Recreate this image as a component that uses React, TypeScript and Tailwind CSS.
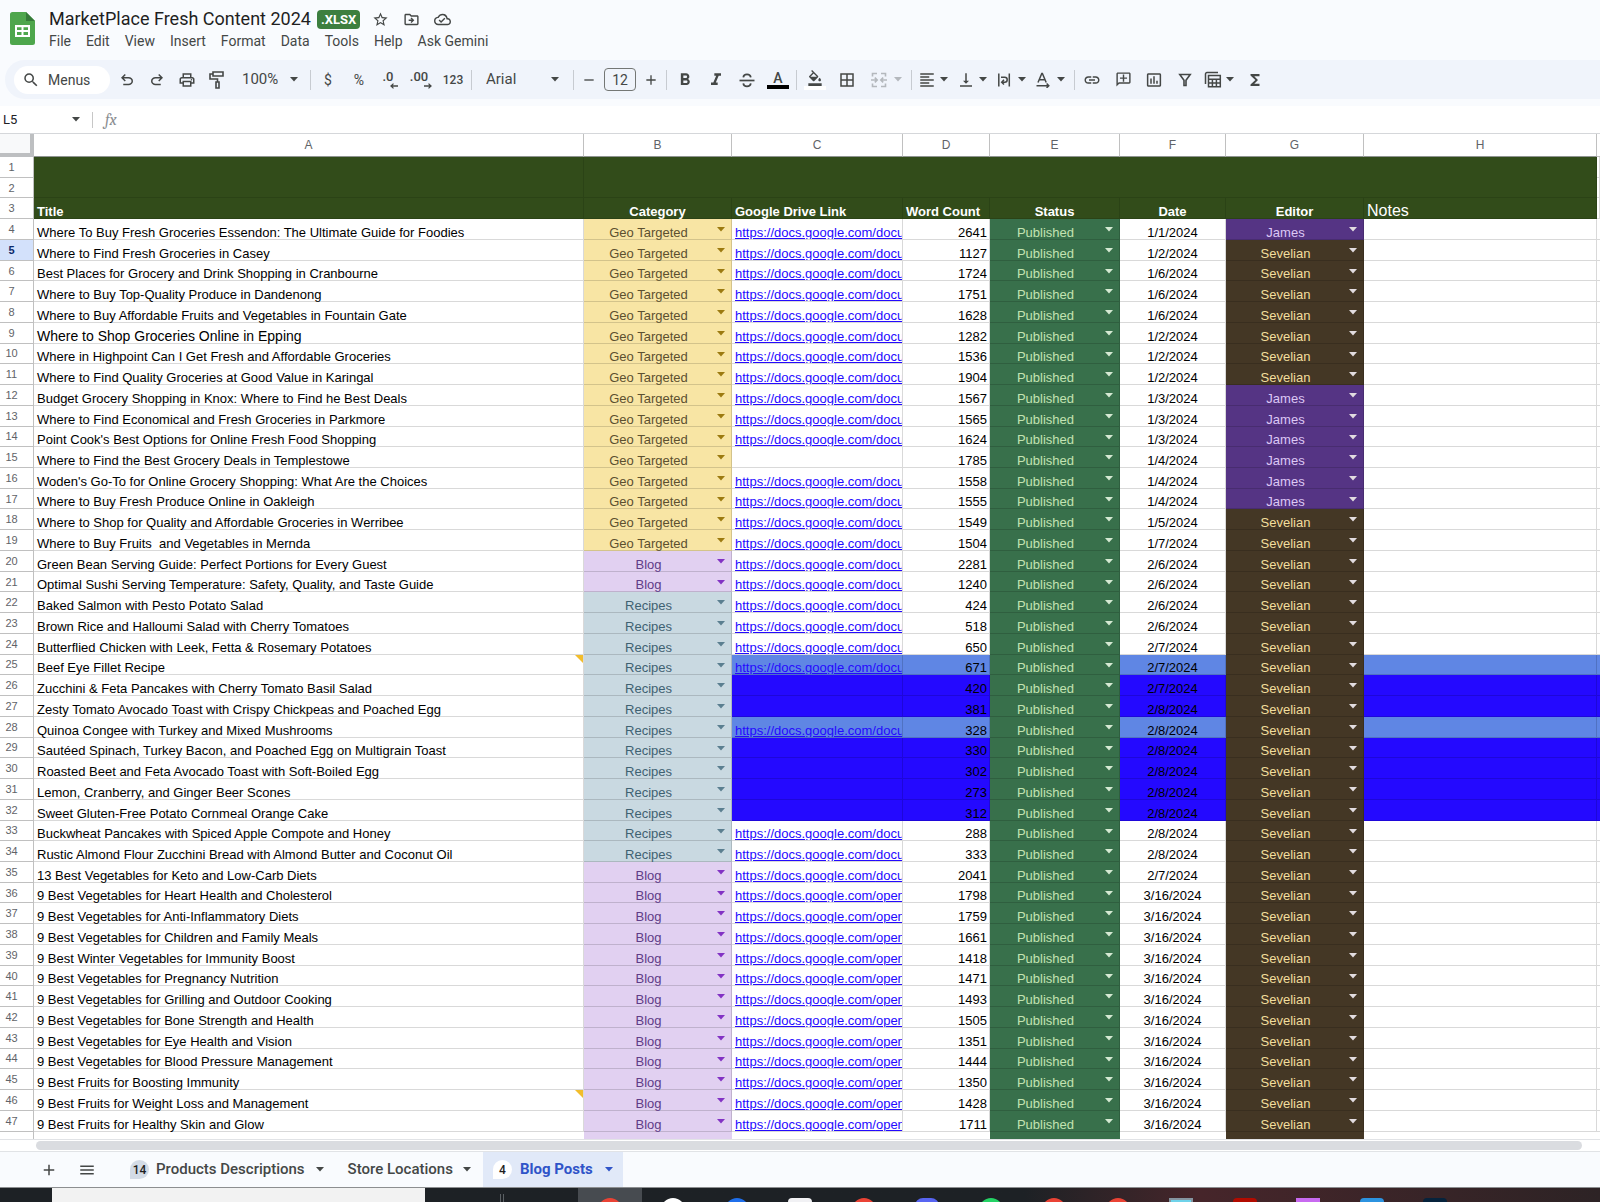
import type { ReactNode } from 'react'
import {
  MdAdd,
  MdBorderAll,
  MdFormatAlignLeft,
  MdFormatBold,
  MdFormatColorFill,
  MdFormatItalic,
  MdFunctions,
  MdInsertChartOutlined,
  MdLink,
  MdMenu,
  MdOutlineAddComment,
  MdOutlineCloudDone,
  MdOutlineDriveFileMove,
  MdOutlineFilterAlt,
  MdOutlinePrint,
  MdRemove,
  MdSearch,
  MdStarBorder,
  MdStrikethroughS,
  MdVerticalAlignBottom,
} from 'react-icons/md'

type Category = 'Geo Targeted' | 'Blog' | 'Recipes'
type Editor = 'James' | 'Sevelian'
type LinkKind = 'docu' | 'open' | ''

interface Post {
  title: string
  category: Category
  link: LinkKind
  words: number
  date: string
  editor: Editor
  shade?: 'light' | 'dark'
  note?: boolean
  large?: boolean
}

function post(
  title: string,
  category: Category,
  link: LinkKind,
  words: number,
  date: string,
  editor: Editor = 'Sevelian',
  extra: Partial<Post> = {},
): Post {
  return { title, category, link, words, date, editor, ...extra }
}

const posts: Post[] = [
  post('Where To Buy Fresh Groceries Essendon: The Ultimate Guide for Foodies', 'Geo Targeted', 'docu', 2641, '1/1/2024', 'James'),
  post('Where to Find Fresh Groceries in Casey', 'Geo Targeted', 'docu', 1127, '1/2/2024'),
  post('Best Places for Grocery and Drink Shopping in Cranbourne', 'Geo Targeted', 'docu', 1724, '1/6/2024'),
  post('Where to Buy Top-Quality Produce in Dandenong', 'Geo Targeted', 'docu', 1751, '1/6/2024'),
  post('Where to Buy Affordable Fruits and Vegetables in Fountain Gate', 'Geo Targeted', 'docu', 1628, '1/6/2024'),
  post('Where to Shop Groceries Online in Epping', 'Geo Targeted', 'docu', 1282, '1/2/2024', 'Sevelian', { large: true }),
  post('Where in Highpoint Can I Get Fresh and Affordable Groceries', 'Geo Targeted', 'docu', 1536, '1/2/2024'),
  post('Where to Find Quality Groceries at Good Value in Karingal', 'Geo Targeted', 'docu', 1904, '1/2/2024'),
  post('Budget Grocery Shopping in Knox: Where to Find he Best Deals', 'Geo Targeted', 'docu', 1567, '1/3/2024', 'James'),
  post('Where to Find Economical and Fresh Groceries in Parkmore', 'Geo Targeted', 'docu', 1565, '1/3/2024', 'James'),
  post("Point Cook's Best Options for Online Fresh Food Shopping", 'Geo Targeted', 'docu', 1624, '1/3/2024', 'James'),
  post('Where to Find the Best Grocery Deals in Templestowe', 'Geo Targeted', '', 1785, '1/4/2024', 'James'),
  post("Woden's Go-To for Online Grocery Shopping: What Are the Choices", 'Geo Targeted', 'docu', 1558, '1/4/2024', 'James'),
  post('Where to Buy Fresh Produce Online in Oakleigh', 'Geo Targeted', 'docu', 1555, '1/4/2024', 'James'),
  post('Where to Shop for Quality and Affordable Groceries in Werribee', 'Geo Targeted', 'docu', 1549, '1/5/2024'),
  post('Where to Buy Fruits  and Vegetables in Mernda', 'Geo Targeted', 'docu', 1504, '1/7/2024'),
  post('Green Bean Serving Guide: Perfect Portions for Every Guest', 'Blog', 'docu', 2281, '2/6/2024'),
  post('Optimal Sushi Serving Temperature: Safety, Quality, and Taste Guide', 'Blog', 'docu', 1240, '2/6/2024'),
  post('Baked Salmon with Pesto Potato Salad', 'Recipes', 'docu', 424, '2/6/2024'),
  post('Brown Rice and Halloumi Salad with Cherry Tomatoes', 'Recipes', 'docu', 518, '2/6/2024'),
  post('Butterflied Chicken with Leek, Fetta & Rosemary Potatoes', 'Recipes', 'docu', 650, '2/7/2024'),
  post('Beef Eye Fillet Recipe', 'Recipes', 'docu', 671, '2/7/2024', 'Sevelian', { shade: 'light', note: true }),
  post('Zucchini & Feta Pancakes with Cherry Tomato Basil Salad', 'Recipes', '', 420, '2/7/2024', 'Sevelian', { shade: 'dark' }),
  post('Zesty Tomato Avocado Toast with Crispy Chickpeas and Poached Egg', 'Recipes', '', 381, '2/8/2024', 'Sevelian', { shade: 'dark' }),
  post('Quinoa Congee with Turkey and Mixed Mushrooms', 'Recipes', 'docu', 328, '2/8/2024', 'Sevelian', { shade: 'light' }),
  post('Sautéed Spinach, Turkey Bacon, and Poached Egg on Multigrain Toast', 'Recipes', '', 330, '2/8/2024', 'Sevelian', { shade: 'dark' }),
  post('Roasted Beet and Feta Avocado Toast with Soft-Boiled Egg', 'Recipes', '', 302, '2/8/2024', 'Sevelian', { shade: 'dark' }),
  post('Lemon, Cranberry, and Ginger Beer Scones', 'Recipes', '', 273, '2/8/2024', 'Sevelian', { shade: 'dark' }),
  post('Sweet Gluten-Free Potato Cornmeal Orange Cake', 'Recipes', '', 312, '2/8/2024', 'Sevelian', { shade: 'dark' }),
  post('Buckwheat Pancakes with Spiced Apple Compote and Honey', 'Recipes', 'docu', 288, '2/8/2024'),
  post('Rustic Almond Flour Zucchini Bread with Almond Butter and Coconut Oil', 'Recipes', 'docu', 333, '2/8/2024'),
  post('13 Best Vegetables for Keto and Low-Carb Diets', 'Blog', 'docu', 2041, '2/7/2024'),
  post('9 Best Vegetables for Heart Health and Cholesterol', 'Blog', 'open', 1798, '3/16/2024'),
  post('9 Best Vegetables for Anti-Inflammatory Diets', 'Blog', 'open', 1759, '3/16/2024'),
  post('9 Best Vegetables for Children and Family Meals', 'Blog', 'open', 1661, '3/16/2024'),
  post('9 Best Winter Vegetables for Immunity Boost', 'Blog', 'open', 1418, '3/16/2024'),
  post('9 Best Vegetables for Pregnancy Nutrition', 'Blog', 'open', 1471, '3/16/2024'),
  post('9 Best Vegetables for Grilling and Outdoor Cooking', 'Blog', 'open', 1493, '3/16/2024'),
  post('9 Best Vegetables for Bone Strength and Health', 'Blog', 'open', 1505, '3/16/2024'),
  post('9 Best Vegetables for Eye Health and Vision', 'Blog', 'open', 1351, '3/16/2024'),
  post('9 Best Vegetables for Blood Pressure Management', 'Blog', 'open', 1444, '3/16/2024'),
  post('9 Best Fruits for Boosting Immunity', 'Blog', 'open', 1350, '3/16/2024'),
  post('9 Best Fruits for Weight Loss and Management', 'Blog', 'open', 1428, '3/16/2024', 'Sevelian', { note: true }),
  post('9 Best Fruits for Healthy Skin and Glow', 'Blog', 'open', 1711, '3/16/2024'),
]

const categoryColors: Record<Category, string> = {
  'Geo Targeted': 'bg-[#f8e5a4] text-[#5c5030]',
  Blog: 'bg-[#e1d0f1] text-[#5f3c88]',
  Recipes: 'bg-[#c9d9e1] text-[#3f6172]',
}

const categoryArrows: Record<Category, string> = {
  'Geo Targeted': 'text-[#9c7a10]',
  Blog: 'text-[#8232c4]',
  Recipes: 'text-[#5b7f90]',
}

const editorColors: Record<Editor, string> = {
  James: 'bg-[#553484] text-[#dcc8f5]',
  Sevelian: 'bg-[#443725] text-[#f2de9d]',
}

const shadeColors = {
  light: 'bg-[#5f86e4]',
  dark: 'bg-[#2409ff]',
}

const menus = ['File', 'Edit', 'View', 'Insert', 'Format', 'Data', 'Tools', 'Help', 'Ask Gemini']

const cell = 'relative border-b border-r border-black/15 p-0 align-bottom'
const headCell = 'border-b border-r border-[#2b4316] bg-[#324c1a] px-[3px] py-0 align-bottom text-white'

function Arrow({ className = '' }: { className?: string }) {
  return (
    <svg viewBox="0 0 8 5" aria-hidden="true" className={`h-[5px] w-2 shrink-0 fill-current ${className}`}>
      <path d="M0 0h8L4 4.6z" />
    </svg>
  )
}

function Divider() {
  return <div className="h-5 w-px shrink-0 bg-[#c7cbd1]" />
}

function Tool({ label, className = 'w-[30px]', children }: { label: string; className?: string; children: ReactNode }) {
  return (
    <button type="button" aria-label={label} className={`flex h-8 shrink-0 items-center justify-center ${className}`}>
      {children}
    </button>
  )
}

function MenuTool({ label, children }: { label: string; children: ReactNode }) {
  return (
    <button type="button" aria-label={label} className="flex h-8 w-[39px] shrink-0 items-center justify-between pl-[3px] pr-1.5">
      {children}
      <Arrow />
    </button>
  )
}

function UndoIcon({ className = '' }: { className?: string }) {
  return (
    <svg viewBox="0 -960 960 960" className={`size-[18px] fill-current ${className}`}>
      <path d="M280-200v-80h284q63 0 109.500-40T720-420q0-60-46.500-100T564-560H312l104 104-56 56-200-200 200-200 56 56-104 104h252q97 0 169.500 63T800-420q0 94-72.500 157T564-200H280Z" />
    </svg>
  )
}

function RollerIcon() {
  return (
    <svg viewBox="0 0 18 20" className="h-5 w-[18px] fill-none stroke-current stroke-[1.6]">
      <path d="M5 2h10v4H5z M5 4H2v5h7.500v3" />
      <path d="M8 12h3v6H8z" />
    </svg>
  )
}

function MergeIcon() {
  return (
    <svg viewBox="0 0 18 18" className="size-[18px] fill-none stroke-current stroke-[1.6]">
      <path d="M7 2.500H2.500V5.500 M11 2.500h4.500V5.500 M7 15.500H2.500V12.500 M11 15.500h4.500V12.500" />
      <path d="M1 9h6 M4.800 6.600 7.200 9l-2.400 2.400 M17 9h-6 M13.200 6.600 10.800 9l2.400 2.400" />
    </svg>
  )
}

function WrapIcon() {
  return (
    <svg viewBox="0 0 16 16" className="size-4 fill-none stroke-current stroke-[1.5]">
      <path d="M2.800 1.500v13 M13.300 1.500v13" />
      <path d="M5 5.200h3.700a2.500 2.500 0 0 1 0 5H6 M8 7.800 5.700 10.200 8 12.600" />
    </svg>
  )
}

function RotateIcon() {
  return (
    <svg viewBox="0 0 16 16" className="size-4 fill-none stroke-current stroke-[1.5]">
      <path d="M3 10.500 6.800 1.500h.6l3.800 9 M4.300 7.700h5.600" />
      <path d="M1.500 13.700h12 M11.600 11.500l2.200 2.200-2.200 2.200" />
    </svg>
  )
}

function FunnelIcon() {
  return (
    <svg viewBox="0 0 16 16" className="size-4 fill-none stroke-current stroke-[1.6]">
      <path d="M2.800 2.500h10.400L9 8.300v5.200H7V8.300z" />
    </svg>
  )
}

function TableIcon() {
  return (
    <svg viewBox="0 0 18 18" className="size-[18px] fill-none stroke-current stroke-[1.5]">
      <path d="M1.500 13V3a1.500 1.500 0 0 1 1.500-1.500h11" />
      <path d="M4.500 4.500h11.800v11.300H4.500z M4.500 8.300h11.800 M4.500 12h11.800 M8.400 8.300v7.500 M12.400 8.300v7.500" />
    </svg>
  )
}

function StrikeIcon() {
  return (
    <svg viewBox="0 0 18 18" className="size-[18px] fill-none stroke-current stroke-[1.7]">
      <path d="M1.500 9.500h15" />
      <path d="M12.800 6.300C12.500 4.300 11 3.300 9 3.300S5.500 4.300 5.300 6.300" />
      <path d="M5.300 12.300c.2 2 1.700 3 3.700 3s3.500-1 3.800-3" />
    </svg>
  )
}

function DecimalIcon({ digits, more }: { digits: string; more?: boolean }) {
  return (
    <span className="flex flex-col items-end">
      <span className="pr-1 text-[13px] font-medium leading-3">{digits}</span>
      <svg viewBox="0 0 8 6" className="h-1.5 w-2 fill-none stroke-current stroke-[1.3]">
        {more ? <path d="M0 3h7 M4.500.600 7 3 4.500 5.400" /> : <path d="M8 3H1 M3.500.600 1 3l2.500 2.400" />}
      </svg>
    </span>
  )
}

function SheetsLogo() {
  return (
    <svg viewBox="0 0 25 33" className="h-[33px] w-[25px] shrink-0">
      <path d="M2.500 0H16l9 9v21.500a2.500 2.500 0 0 1-2.500 2.500h-20A2.500 2.500 0 0 1 0 30.500v-28A2.500 2.500 0 0 1 2.500 0z" fill="#4ea64c" />
      <path d="M16 0l9 9h-9z" fill="#357a38" />
      <path d="M5 13h15v12H5z" fill="#fff" />
      <path d="M7 15.200h4.500v2.900H7z M13.500 15.200H18v2.900h-4.500z M7 20h4.500v2.900H7z M13.500 20H18v2.900h-4.500z" fill="#4ea64c" />
    </svg>
  )
}

function TopBar() {
  return (
    <header className="flex h-[60px] items-start bg-[#f9fbfe] pl-2.5">
      <div className="pt-3">
        <SheetsLogo />
      </div>
      <div className="flex flex-col pl-3.5 pt-[7px]">
        <div className="flex h-6 items-center text-[#444746]">
          <h1 className="text-lg leading-6 text-[#1f1f1f]">MarketPlace Fresh Content 2024</h1>
          <span className="ml-1.5 rounded bg-[#3d7f3f] px-1 text-[13px] font-bold leading-[19px] text-white">.XLSX</span>
          <div className="ml-3 flex items-center gap-3.5">
            <button type="button" aria-label="Star"><MdStarBorder className="size-[17px]" /></button>
            <button type="button" aria-label="Move"><MdOutlineDriveFileMove className="size-[17px]" /></button>
            <button type="button" aria-label="Document status"><MdOutlineCloudDone className="size-[17px]" /></button>
          </div>
        </div>
        <nav className="flex gap-[15px] text-sm leading-5 text-[#444746]">
          {menus.map((m) => (
            <button key={m} type="button">{m}</button>
          ))}
        </nav>
      </div>
    </header>
  )
}

function Toolbar() {
  return (
    <div className="bg-[#f9fbfe] pb-[7px] pl-[5px]">
      <div className="flex h-[39px] items-center rounded-l-full bg-[#f0f4fb] pl-[9px] text-[#444746]">
        <button type="button" className="flex h-7 w-24 shrink-0 items-center gap-2 rounded-full bg-white pl-2 text-sm">
          <MdSearch className="size-[18px]" />
          Menus
        </button>
        <div className="ml-0.5 flex">
          <Tool label="Undo"><UndoIcon /></Tool>
          <Tool label="Redo"><UndoIcon className="-scale-x-100" /></Tool>
          <Tool label="Print"><MdOutlinePrint className="size-[18px]" /></Tool>
          <Tool label="Paint format"><RollerIcon /></Tool>
        </div>
        <div className="relative flex w-[78px] items-center pl-2.5">
          <select aria-label="Zoom" className="w-full appearance-none text-[15px] outline-none">
            <option>100%</option>
          </select>
          <Arrow className="pointer-events-none absolute right-3" />
        </div>
        <Divider />
        <div className="flex gap-px px-0.5 text-sm">
          <Tool label="Currency">$</Tool>
          <Tool label="Percent">%</Tool>
          <Tool label="Decrease decimal places"><DecimalIcon digits=".0" /></Tool>
          <Tool label="Increase decimal places"><DecimalIcon digits=".00" more /></Tool>
          <Tool label="More formats" className="w-8 text-xs font-medium">123</Tool>
        </div>
        <Divider />
        <div className="relative flex w-[101px] items-center pl-3.5">
          <select aria-label="Font" className="w-full appearance-none text-[15px] outline-none">
            <option>Arial</option>
          </select>
          <Arrow className="pointer-events-none absolute right-3.5" />
        </div>
        <Divider />
        <Tool label="Decrease font size"><MdRemove className="size-4" /></Tool>
        <input
          aria-label="Font size"
          defaultValue="12"
          className="h-[23px] w-8 shrink-0 rounded border border-[#747775] text-center text-sm outline-none"
        />
        <Tool label="Increase font size"><MdAdd className="size-4" /></Tool>
        <Divider />
        <div className="flex gap-px px-[3px]">
          <Tool label="Bold"><MdFormatBold className="size-5" /></Tool>
          <Tool label="Italic"><MdFormatItalic className="size-5" /></Tool>
          <Tool label="Strikethrough"><StrikeIcon /></Tool>
          <Tool label="Text color" className="w-[30px] flex-col">
            <span className="text-sm font-medium leading-[14px]">A</span>
            <span className="h-1 w-[22px] bg-black" />
          </Tool>
        </div>
        <Divider />
        <div className="flex gap-0.5 px-[3px]">
          <Tool label="Fill color" className="w-[30px] flex-col">
            <MdFormatColorFill className="size-4" />
            <span className="h-1 w-[22px] bg-white" />
          </Tool>
          <Tool label="Borders"><MdBorderAll className="size-[18px]" /></Tool>
          <Tool label="Merge cells" className="w-11 gap-1.5 text-[#b4b8bd]">
            <MergeIcon />
            <Arrow />
          </Tool>
        </div>
        <Divider />
        <div className="flex px-[3px]">
          <MenuTool label="Horizontal align"><MdFormatAlignLeft className="size-[18px]" /></MenuTool>
          <MenuTool label="Vertical align"><MdVerticalAlignBottom className="size-[18px]" /></MenuTool>
          <MenuTool label="Text wrapping"><WrapIcon /></MenuTool>
          <MenuTool label="Text rotation"><RotateIcon /></MenuTool>
        </div>
        <Divider />
        <div className="flex gap-px pl-0.5">
          <Tool label="Insert link"><MdLink className="size-[18px]" /></Tool>
          <Tool label="Insert comment"><MdOutlineAddComment className="size-[17px] -scale-x-100" /></Tool>
          <Tool label="Insert chart"><MdInsertChartOutlined className="size-[18px]" /></Tool>
          <Tool label="Create a filter"><FunnelIcon /></Tool>
          <MenuTool label="Table views"><TableIcon /></MenuTool>
          <Tool label="Functions" className="w-7"><MdFunctions className="size-[18px]" /></Tool>
        </div>
      </div>
    </div>
  )
}

function FormulaBar() {
  return (
    <div className="flex h-[27px] items-center bg-white">
      <input aria-label="Name box" defaultValue="L5" className="w-[72px] pl-[3px] text-[13px] text-[#202124] outline-none" />
      <Arrow className="text-[#444746]" />
      <div className="ml-3 h-4 w-px bg-[#c7c7c7]" />
      <label htmlFor="formula" className="w-10 pl-3 font-serif text-base italic leading-5 text-[#8a8d91]">fx</label>
      <input id="formula" className="flex-1 outline-none" />
    </div>
  )
}

function ChipCell({
  label,
  value,
  options,
  colors,
  arrow,
}: {
  label: string
  value: string
  options: string[]
  colors: string
  arrow: string
}) {
  return (
    <td className={`${cell} ${colors}`}>
      <select
        aria-label={label}
        defaultValue={value}
        className="-mb-0.5 block h-5 w-full appearance-none pr-[18px] pt-1 text-center leading-4 outline-none"
      >
        {options.map((o) => (
          <option key={o}>{o}</option>
        ))}
      </select>
      <Arrow className={`pointer-events-none absolute right-1.5 top-2 ${arrow}`} />
    </td>
  )
}

function RowNumber({ n }: { n: number }) {
  const color = n === 5 ? 'bg-[#d3e1fb] font-bold text-[#0b2a6b]' : 'bg-white font-normal text-[#5f6368]'
  return (
    <th
      scope="row"
      className={`border-b border-r border-[#c0c0c0] p-0 pr-2.5 align-middle text-[11px] leading-[14px] ${color}`}
    >
      {n}
    </th>
  )
}

function PostRow({ row, n }: { row: Post; n: number }) {
  const shade = row.shade ? shadeColors[row.shade] : 'bg-white'
  return (
    <tr className="h-5">
      <RowNumber n={n} />
      <td className={`${cell} whitespace-pre bg-white pl-[3px] ${row.large ? 'text-sm leading-[14px]' : ''}`}>
        {row.title}
        {row.note && (
          <svg viewBox="0 0 8 8" className="absolute right-0 top-0 size-2">
            <path d="M0 0h8v8z" fill="#f2bd2c" />
          </svg>
        )}
      </td>
      <ChipCell
        label={`Category of row ${n}`}
        value={row.category}
        options={['Geo Targeted', 'Blog', 'Recipes']}
        colors={categoryColors[row.category]}
        arrow={categoryArrows[row.category]}
      />
      <td className={`${cell} ${shade} overflow-hidden whitespace-nowrap pl-[3px]`}>
        {row.link && (
          <a href={`#row-${n}`} className="text-[#2409ff] underline">
            https://docs.google.com/{row.link}
          </a>
        )}
      </td>
      <td className={`${cell} ${shade} pr-0.5 text-right`}>{row.words}</td>
      <ChipCell
        label={`Status of row ${n}`}
        value="Published"
        options={['Published', 'Draft']}
        colors="bg-[#38704b] text-[#c3e3b2]"
        arrow="text-[#d5ead3]"
      />
      <td className={`${cell} ${shade} text-center`}>{row.date}</td>
      <ChipCell
        label={`Editor of row ${n}`}
        value={row.editor}
        options={['James', 'Sevelian']}
        colors={editorColors[row.editor]}
        arrow="text-[#e2dce0]"
      />
      <td className={`${cell} ${shade}`} />
      <td className={`${cell} ${shade} border-r-0`} />
    </tr>
  )
}

function Sheet() {
  return (
    <main className="h-[1006px] overflow-hidden border-t border-[#d5d7da] bg-white">
      <table className="h-[998px] w-full table-fixed border-separate border-spacing-0 text-[13px] leading-3 text-black">
        <colgroup>
          <col className="w-[34px]" />
          <col className="w-[550px]" />
          <col className="w-[148px]" />
          <col className="w-[171px]" />
          <col className="w-[87px]" />
          <col className="w-[130px]" />
          <col className="w-[106px]" />
          <col className="w-[138px]" />
          <col />
          <col className="w-[3px]" />
        </colgroup>
        <thead>
          <tr className="h-[23px]">
            <td className="border-b-4 border-r-4 border-[#bdbfc1] bg-[#f8f9fa] p-0" />
            {['A', 'B', 'C', 'D', 'E', 'F', 'G', 'H'].map((c) => (
              <th key={c} scope="col" className="border-b border-r border-[#c0c0c0] border-b-[#8f9491] p-0 text-xs font-normal text-[#5f6368]">
                {c}
              </th>
            ))}
            <td className="border-b border-[#c0c0c0] p-0" />
          </tr>
        </thead>
        <tbody>
          <tr className="h-5">
            <RowNumber n={1} />
            <td rowSpan={2} className={headCell} />
            <td rowSpan={2} colSpan={7} className={headCell} />
            <td className={cell} />
          </tr>
          <tr className="h-5">
            <RowNumber n={2} />
            <td className={cell} />
          </tr>
          <tr className="h-5">
            <RowNumber n={3} />
            <th scope="col" className={`${headCell} text-left`}>Title</th>
            <th scope="col" className={headCell}>Category</th>
            <th scope="col" className={`${headCell} text-left`}>Google Drive Link</th>
            <th scope="col" className={`${headCell} text-left`}>Word Count</th>
            <th scope="col" className={headCell}>Status</th>
            <th scope="col" className={headCell}>Date</th>
            <th scope="col" className={headCell}>Editor</th>
            <th scope="col" className={`${headCell} text-left text-base font-normal leading-[14px]`}>Notes</th>
            <td className={cell} />
          </tr>
          {posts.map((row, i) => (
            <PostRow key={row.title} row={row} n={i + 4} />
          ))}
        </tbody>
      </table>
      {/* top edge of the next row, cut off by the scroll bar */}
      <div className="flex h-[7px]">
        <div className="w-[34px] border-r border-[#c0c0c0]" />
        <div className="w-[550px]" />
        <div className="w-[148px] bg-[#e1d0f1]" />
        <div className="w-[258px]" />
        <div className="w-[130px] bg-[#38704b]" />
        <div className="w-[106px]" />
        <div className="w-[138px] bg-[#443725]" />
      </div>
    </main>
  )
}

function TabBadge({ children, className }: { children: ReactNode; className: string }) {
  return (
    <span className={`flex size-[19px] items-center justify-center rounded-full rounded-bl-none text-xs font-medium text-[#1f1f1f] ${className}`}>
      {children}
    </span>
  )
}

function SheetTabs() {
  return (
    <nav className="flex h-[35px] items-center bg-[#f9fbfe] pl-9 text-[15px] font-medium text-[#444746]">
      <Tool label="Add sheet" className="w-[26px]"><MdAdd className="size-[18px]" /></Tool>
      <Tool label="All sheets" className="ml-3 w-[26px]"><MdMenu className="size-[18px]" /></Tool>
      <button type="button" className="ml-[30px] flex items-center gap-[7px]">
        <TabBadge className="bg-[#d3dbe6]">14</TabBadge>
        <span>Products Descriptions</span>
        <Arrow className="ml-1" />
      </button>
      <button type="button" className="ml-6 flex items-center gap-2.5">
        <span>Store Locations</span>
        <Arrow />
      </button>
      <button type="button" className="ml-3 flex h-full items-center gap-2 bg-[#e1e9f8] px-2.5 font-bold text-[#2f54c8]">
        <TabBadge className="bg-white">4</TabBadge>
        <span>Blog Posts</span>
        <Arrow className="ml-1" />
      </button>
    </nav>
  )
}

const taskbarApps = [
  'rounded-full bg-[#ea4335]',
  'rounded-full bg-white',
  'rounded-full bg-[#1f6feb]',
  'rounded bg-[#f1f1f4]',
  'rounded-full bg-[#ea4335]',
  'rounded-lg bg-[#5865f2]',
  'rounded-full bg-[#25d366]',
  'rounded-full bg-[#ea4335]',
  'rounded-full bg-[#ea4335]',
  'border-2 border-b-0 border-[#8595a0] bg-[#6fd3ea]',
  'rounded bg-[#b30b00]',
  'bg-[#c86af0]',
  'rounded bg-[#2c93e0]',
  'rounded bg-[#06233c]',
]

function Taskbar() {
  return (
    <footer className="flex h-[15px] overflow-hidden border-t border-[#8c8e90] bg-linear-to-r from-[#1d2125] from-64% via-[#46252a] via-75% to-[#2d2325]">
      <div className="w-[425px] border-l-[52px] border-[#1d2125] bg-[#f2f2f2]" />
      <div className="flex w-[153px] items-end justify-center gap-0.5">
        <span className="h-2 w-px bg-[#5b6064]" />
        <span className="h-2 w-px bg-[#5b6064]" />
      </div>
      <div className="grid w-[889px] grid-cols-14">
        {taskbarApps.map((app, i) => (
          <div key={i} className={`flex items-start justify-center pt-2.5 ${i === 0 ? 'bg-[#474b50]' : ''}`}>
            <span className={`size-6 shrink-0 ${app}`} />
          </div>
        ))}
      </div>
    </footer>
  )
}

export default function App() {
  return (
    <div className="flex min-h-screen flex-col overflow-hidden bg-white font-[Roboto,sans-serif]">
      <TopBar />
      <Toolbar />
      <FormulaBar />
      <div className="font-['Liberation_Sans',Arial,sans-serif]">
        <Sheet />
      </div>
      <div className="border-y border-[#e1e3e6] bg-white py-px pl-9 pr-[18px]">
        <div className="h-[9px] rounded-full bg-[#dadce0]" />
      </div>
      <SheetTabs />
      <Taskbar />
    </div>
  )
}
